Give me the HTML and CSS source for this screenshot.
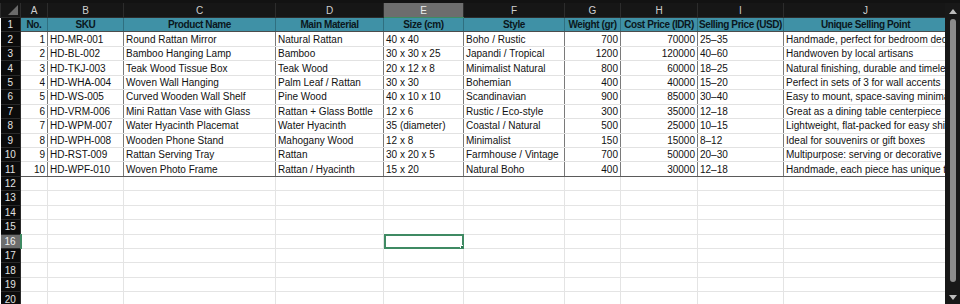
FILE: index.html
```html
<!DOCTYPE html>
<html lang="en">
	<head>
		<meta charset="utf-8">
		<meta name="viewport" content="width=device-width, initial-scale=1.0">
		<title>Products sheet</title>
		<link rel="stylesheet" href="styles.css">
	</head>

	<body>
		<div class="window">
			<div class="sheet">
				<table class="grid">
					<colgroup>
						<col class="c-rh">
						<col class="c-a">
						<col class="c-b">
						<col class="c-c">
						<col class="c-d">
						<col class="c-e">
						<col class="c-f">
						<col class="c-g">
						<col class="c-h">
						<col class="c-i">
						<col class="c-j">
					</colgroup>
					<thead>
						<tr class="letters">
							<th class="corner"><span class="tri"></span></th>
							<th>A</th><th>B</th><th>C</th><th>D</th><th class="sel">E</th><th>F</th><th>G</th><th>H</th><th>I</th><th>J</th>
						</tr>
					</thead>
					<tbody>
						<tr class="head">
							<th class="rn">1</th>
							<td>No.</td><td>SKU</td><td>Product Name</td><td>Main Material</td><td>Size (cm)</td><td>Style</td><td>Weight (gr)</td><td>Cost Price (IDR)</td><td>Selling Price (USD)</td><td>Unique Selling Point</td>
						</tr>
						<tr class="data">
							<th class="rn">2</th>
							<td class="num">1</td><td>HD-MR-001</td><td>Round Rattan Mirror</td><td>Natural Rattan</td><td>40 x 40</td><td>Boho / Rustic</td><td class="num">700</td><td class="num">70000</td><td>25–35</td><td>Handmade, perfect for bedroom decor</td>
						</tr>
						<tr class="data">
							<th class="rn">3</th>
							<td class="num">2</td><td>HD-BL-002</td><td>Bamboo Hanging Lamp</td><td>Bamboo</td><td>30 x 30 x 25</td><td>Japandi / Tropical</td><td class="num">1200</td><td class="num">120000</td><td>40–60</td><td>Handwoven by local artisans</td>
						</tr>
						<tr class="data">
							<th class="rn">4</th>
							<td class="num">3</td><td>HD-TKJ-003</td><td>Teak Wood Tissue Box</td><td>Teak Wood</td><td>20 x 12 x 8</td><td>Minimalist Natural</td><td class="num">800</td><td class="num">60000</td><td>18–25</td><td>Natural finishing, durable and timeless</td>
						</tr>
						<tr class="data">
							<th class="rn">5</th>
							<td class="num">4</td><td>HD-WHA-004</td><td>Woven Wall Hanging</td><td>Palm Leaf / Rattan</td><td>30 x 30</td><td>Bohemian</td><td class="num">400</td><td class="num">40000</td><td>15–20</td><td>Perfect in sets of 3 for wall accents</td>
						</tr>
						<tr class="data">
							<th class="rn">6</th>
							<td class="num">5</td><td>HD-WS-005</td><td>Curved Wooden Wall Shelf</td><td>Pine Wood</td><td>40 x 10 x 10</td><td>Scandinavian</td><td class="num">900</td><td class="num">85000</td><td>30–40</td><td>Easy to mount, space-saving minimalist</td>
						</tr>
						<tr class="data">
							<th class="rn">7</th>
							<td class="num">6</td><td>HD-VRM-006</td><td>Mini Rattan Vase with Glass</td><td>Rattan + Glass Bottle</td><td>12 x 6</td><td>Rustic / Eco-style</td><td class="num">300</td><td class="num">35000</td><td>12–18</td><td>Great as a dining table centerpiece</td>
						</tr>
						<tr class="data">
							<th class="rn">8</th>
							<td class="num">7</td><td>HD-WPM-007</td><td>Water Hyacinth Placemat</td><td>Water Hyacinth</td><td>35 (diameter)</td><td>Coastal / Natural</td><td class="num">500</td><td class="num">25000</td><td>10–15</td><td>Lightweight, flat-packed for easy shipping</td>
						</tr>
						<tr class="data">
							<th class="rn">9</th>
							<td class="num">8</td><td>HD-WPH-008</td><td>Wooden Phone Stand</td><td>Mahogany Wood</td><td>12 x 8</td><td>Minimalist</td><td class="num">150</td><td class="num">15000</td><td>8–12</td><td>Ideal for souvenirs or gift boxes</td>
						</tr>
						<tr class="data">
							<th class="rn">10</th>
							<td class="num">9</td><td>HD-RST-009</td><td>Rattan Serving Tray</td><td>Rattan</td><td>30 x 20 x 5</td><td>Farmhouse / Vintage</td><td class="num">700</td><td class="num">50000</td><td>20–30</td><td>Multipurpose: serving or decorative</td>
						</tr>
						<tr class="data last">
							<th class="rn">11</th>
							<td class="num">10</td><td>HD-WPF-010</td><td>Woven Photo Frame</td><td>Rattan / Hyacinth</td><td>15 x 20</td><td>Natural Boho</td><td class="num">400</td><td class="num">30000</td><td>12–18</td><td>Handmade, each piece has unique texture</td>
						</tr>
						<tr><th class="rn">12</th><td></td><td></td><td></td><td></td><td></td><td></td><td></td><td></td><td></td><td></td></tr>
						<tr><th class="rn">13</th><td></td><td></td><td></td><td></td><td></td><td></td><td></td><td></td><td></td><td></td></tr>
						<tr><th class="rn">14</th><td></td><td></td><td></td><td></td><td></td><td></td><td></td><td></td><td></td><td></td></tr>
						<tr><th class="rn">15</th><td></td><td></td><td></td><td></td><td></td><td></td><td></td><td></td><td></td><td></td></tr>
						<tr><th class="rn sel">16</th><td></td><td></td><td></td><td></td><td class="active"><span class="handle"></span></td><td></td><td></td><td></td><td></td><td></td></tr>
						<tr><th class="rn">17</th><td></td><td></td><td></td><td></td><td></td><td></td><td></td><td></td><td></td><td></td></tr>
						<tr><th class="rn">18</th><td></td><td></td><td></td><td></td><td></td><td></td><td></td><td></td><td></td><td></td></tr>
						<tr><th class="rn">19</th><td></td><td></td><td></td><td></td><td></td><td></td><td></td><td></td><td></td><td></td></tr>
						<tr><th class="rn">20</th><td></td><td></td><td></td><td></td><td></td><td></td><td></td><td></td><td></td><td></td></tr>
					</tbody>
				</table>
			</div>
			<div class="vscroll">
				<span class="arrow up"></span>
				<span class="thumb"></span>
				<span class="arrow down"></span>
			</div>
		</div>
	</body>
</html>
```

FILE: styles.css
```css
html, body{
	margin: 0;
	height: 100%;
	background-color: #121212;
	overflow: hidden;
}
.window{
	display: flex;
	height: 100%;
	padding-top: 3px;
	box-sizing: border-box;
	font-family: "Liberation Sans", Arial, sans-serif;
	font-size: 10px;
}
.sheet{
	flex: 1;
	overflow: hidden;
	background-color: #fff;
}
.grid{
	border-collapse: collapse;
	table-layout: fixed;
	width: 947px;
}
.c-rh{ width: 20px; }
.c-a{ width: 27px; }
.c-b{ width: 76px; }
.c-c{ width: 152px; }
.c-d{ width: 108px; }
.c-e{ width: 80px; }
.c-f{ width: 101px; }
.c-g{ width: 56px; }
.c-h{ width: 77px; }
.c-i{ width: 86px; }
.c-j{ width: 164px; }

.grid tr{
	height: 14.45px;
}
.grid td, .grid th{
	padding: 0 2px;
	white-space: nowrap;
	overflow: hidden;
	line-height: 13px;
	font-weight: normal;
}
.grid td{
	border: 1px solid #e4e4e4;
	color: #111;
	text-align: left;
}

/* column letters */
.letters th{
	height: 14px;
	background-color: #161616;
	color: #cfcfcf;
	border: 1px solid #2c2c2c;
	border-top: none;
	text-align: center;
}
.letters th.sel{
	background-color: #6d6d6d;
	color: #ececec;
	border-bottom: 1px solid #3f8a63;
}
.corner{
	position: relative;
}
.tri{
	position: absolute;
	right: 2px;
	bottom: 2px;
	width: 0;
	height: 0;
	border-left: 10px solid transparent;
	border-bottom: 10px solid #6a6a6a;
}

/* row numbers */
.grid th.rn{
	background-color: #0b0b0b;
	color: #e2e2e2;
	border: 1px solid #2a2a2a;
	border-left: none;
	text-align: center;
	padding: 0;
}
.grid th.rn.sel{
	background-color: #6d6d6d;
	color: #f2f2f2;
	border-right: 2px solid #3f8a63;
}

/* header row */
.head td{
	background-color: #3f91a6;
	color: #0a1720;
	font-weight: bold;
	font-size: 10px;
	letter-spacing: -0.4px;
	text-align: center;
	padding: 0;
	border: 1px solid #2f6f80;
	border-bottom-color: #4c4c4c;
}

/* data rows */
.data td{
	border-left: 1px solid #7a7a7a;
	border-right: 1px solid #7a7a7a;
	border-top: 1px solid #e2e2e2;
	border-bottom: 1px solid #e2e2e2;
}
.data.last td{
	border-bottom: 1px solid #5a5a5a;
}
.data td.num{
	text-align: right;
}

.grid td.active{
	position: relative;
	outline: 2px solid #3f8a63;
	outline-offset: -2px;
}
.handle{
	position: absolute;
	right: -3px;
	bottom: -3px;
	width: 4px;
	height: 4px;
	background-color: #2f7a52;
	border: 1px solid #fff;
}

/* scrollbar */
.vscroll{
	width: 15px;
	background-color: #181818;
	display: flex;
	flex-direction: column;
	align-items: center;
	padding: 6px 0 4px;
	gap: 5px;
}
.thumb{
	flex: 1;
	width: 6px;
	border-radius: 3px;
	background-color: #8c8c8c;
	margin-bottom: 8px;
}
.arrow{
	width: 0;
	height: 0;
	border-left: 4px solid transparent;
	border-right: 4px solid transparent;
}
.arrow.up{
	border-bottom: 5px solid #bdbdbd;
}
.arrow.down{
	border-top: 5px solid #bdbdbd;
}
```
